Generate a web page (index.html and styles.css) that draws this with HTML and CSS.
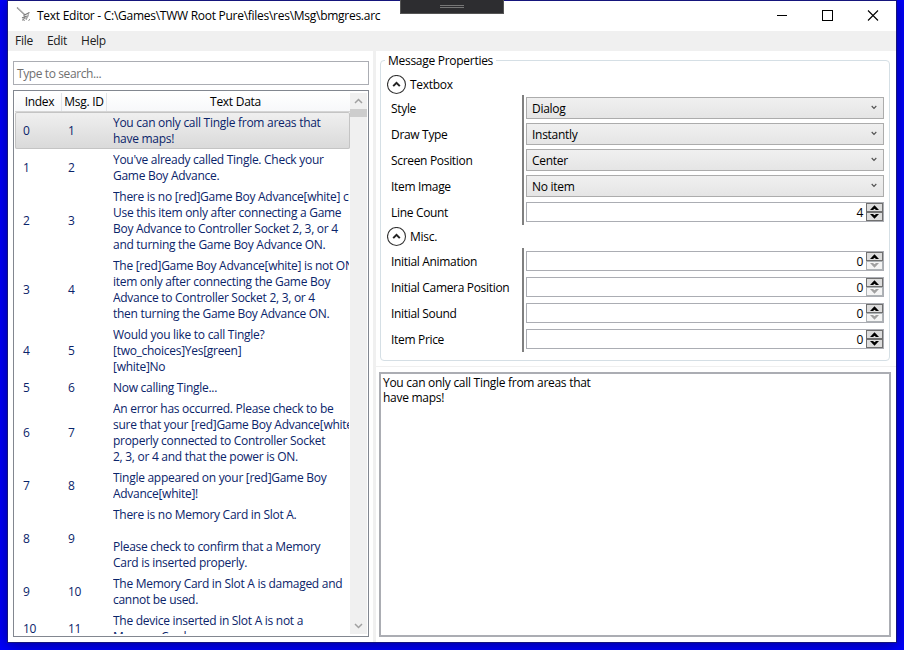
FILE: index.html
```
<!DOCTYPE html>
<html lang="en">
<head>
<meta charset="utf-8">
<title>Text Editor</title>
<link rel="stylesheet" href="styles.css">
</head>
<body>
<svg class="defs" width="0" height="0">
  <symbol id="chev" viewBox="0 0 6 5"><path d="M0.7 1 L3 3.4 L5.3 1" fill="none" stroke="#505050" stroke-width="1.1"/></symbol>
  <symbol id="up" viewBox="0 0 9 5"><path d="M0 5 L4.5 0.2 L9 5 H6 L4.5 3.8 L3 5 Z" fill="currentColor"/></symbol>
  <symbol id="down" viewBox="0 0 9 5"><path d="M0 0 L4.5 4.8 L9 0 H6 L4.5 1.2 L3 0 Z" fill="currentColor"/></symbol>
  <symbol id="expand" viewBox="0 0 20 20"><circle cx="9.5" cy="9.5" r="9" fill="#fff" stroke="#333" stroke-width="1.1"/><path d="M6.2 11.1 L9.5 7.8 L12.8 11.1" fill="none" stroke="#222" stroke-width="2"/></symbol>
</svg>
<div class="window">
  <div class="dock"><i></i><i></i></div>
  <header class="title">
    <svg class="logo" width="16" height="16" viewBox="0 0 16 16" fill="none"><path d="M1 0.5 L9 8" stroke="#8a8a8a" stroke-width="1.3"/><path d="M2.2 1 L9.5 7.6" stroke="#d5d5d5" stroke-width=".7"/><path d="M7.5 8.5 L10.5 7 L13.5 5.5 M6 11 L9 9.5 L12.5 9 M6.5 13.5 L8.5 11 L11 11" stroke="#777" stroke-width="1.1"/><path d="M12.5 5.5 L12 9 M6.5 12.5 L9 13.5 M11.5 10 L10 13 M13.8 12 L12.5 14" stroke="#999"/></svg>
    <span class="caption">Text Editor - C:\Games\TWW Root Pure\files\res\Msg\bmgres.arc</span>
    <svg class="controls" width="104" height="12" viewBox="0 0 104 12" fill="none" stroke="#000" shape-rendering="crispEdges"><path d="M1 5.5 H11"/><rect x="46.5" y="0.5" width="10" height="10"/><path shape-rendering="auto" d="M92 0.5 L102 10.5 M102 0.5 L92 10.5" stroke-width="1.1"/></svg>
  </header>
  <nav class="menu"><span>File</span><span>Edit</span><span>Help</span></nav>
  <main class="content">
    <section class="left">
      <div class="search">Type to search...</div>
      <div class="list">
        <div class="table">
          <div class="thead"><span>Index</span><span>Msg. ID</span><span>Text Data</span></div>
          <div class="row selected"><span>0</span><span>1</span><p>You can only call Tingle from areas that
have maps!</p></div>
          <div class="row"><span>1</span><span>2</span><p>You've already called Tingle. Check your
Game Boy Advance.</p></div>
          <div class="row"><span>2</span><span>3</span><p>There is no [red]Game Boy Advance[white] co
Use this item only after connecting a Game
Boy Advance to Controller Socket 2, 3, or 4
and turning the Game Boy Advance ON.</p></div>
          <div class="row"><span>3</span><span>4</span><p>The [red]Game Boy Advance[white] is not ON
item only after connecting the Game Boy
Advance to Controller Socket 2, 3, or 4
then turning the Game Boy Advance ON.</p></div>
          <div class="row"><span>4</span><span>5</span><p>Would you like to call Tingle?
[two_choices]Yes[green]
[white]No</p></div>
          <div class="row"><span>5</span><span>6</span><p>Now calling Tingle...</p></div>
          <div class="row"><span>6</span><span>7</span><p>An error has occurred. Please check to be
sure that your [red]Game Boy Advance[white
properly connected to Controller Socket
2, 3, or 4 and that the power is ON.</p></div>
          <div class="row"><span>7</span><span>8</span><p>Tingle appeared on your [red]Game Boy
Advance[white]!</p></div>
          <div class="row"><span>8</span><span>9</span><p>There is no Memory Card in Slot A.

Please check to confirm that a Memory
Card is inserted properly.</p></div>
          <div class="row"><span>9</span><span>10</span><p>The Memory Card in Slot A is damaged and
cannot be used.</p></div>
          <div class="row"><span>10</span><span>11</span><p>The device inserted in Slot A is not a
Memory Card.</p></div>
        </div>
        <div class="scroll">
          <svg width="9" height="6" viewBox="0 0 9 6"><path d="M1 5 L4.5 1.5 L8 5" fill="none" stroke="#a0a0a0" stroke-width="1.5"/></svg>
          <div class="thumb"></div>
          <svg width="9" height="6" viewBox="0 0 9 6"><path d="M1 1 L4.5 4.5 L8 1" fill="none" stroke="#a0a0a0" stroke-width="1.5"/></svg>
        </div>
      </div>
    </section>
    <div class="vsplit"></div>
    <section class="right">
      <fieldset class="props">
        <legend>Message Properties</legend>
        <div class="expander first"><svg width="20" height="20"><use href="#expand"/></svg>Textbox</div>
        <div class="prop"><label>Style</label><div class="combo">Dialog<svg width="6" height="5"><use href="#chev"/></svg></div></div>
        <div class="prop"><label>Draw Type</label><div class="combo">Instantly<svg width="6" height="5"><use href="#chev"/></svg></div></div>
        <div class="prop"><label>Screen Position</label><div class="combo">Center<svg width="6" height="5"><use href="#chev"/></svg></div></div>
        <div class="prop"><label>Item Image</label><div class="combo">No item<svg width="6" height="5"><use href="#chev"/></svg></div></div>
        <div class="prop"><label>Line Count</label><div class="num"><span>4</span><div class="spin"><b><svg width="9" height="5"><use href="#up"/></svg></b><b><svg width="9" height="5"><use href="#down"/></svg></b></div></div></div>
        <div class="expander"><svg width="20" height="20"><use href="#expand"/></svg>Misc.</div>
        <div class="prop"><label>Initial Animation</label><div class="num"><span>0</span><div class="spin"><b><svg width="9" height="5"><use href="#up"/></svg></b><b class="off"><svg width="9" height="5"><use href="#down"/></svg></b></div></div></div>
        <div class="prop"><label>Initial Camera Position</label><div class="num"><span>0</span><div class="spin"><b><svg width="9" height="5"><use href="#up"/></svg></b><b class="off"><svg width="9" height="5"><use href="#down"/></svg></b></div></div></div>
        <div class="prop"><label>Initial Sound</label><div class="num"><span>0</span><div class="spin"><b><svg width="9" height="5"><use href="#up"/></svg></b><b class="off"><svg width="9" height="5"><use href="#down"/></svg></b></div></div></div>
        <div class="prop"><label>Item Price</label><div class="num"><span>0</span><div class="spin"><b><svg width="9" height="5"><use href="#up"/></svg></b><b><svg width="9" height="5"><use href="#down"/></svg></b></div></div></div>
      </fieldset>
      <div class="hsplit"></div>
      <div class="editor">You can only call Tingle from areas that
have maps!</div>
    </section>
  </main>
</div>
</body>
</html>
```
FILE: styles.css
```
* { box-sizing: border-box; }
body {
  margin: 0;
  width: 904px;
  height: 650px;
  padding: 0 7px 7px;
  overflow: hidden;
  background: #00f;
  font: 12px/16px "Open Sans", "Noto Sans", sans-serif;
  letter-spacing: -0.28px;
  color: #000;
}
.defs { position: absolute; }
svg { display: block; flex: none; }
.window {
  position: relative;
  height: 643px;
  border: 1px solid #15157c;
  background: #fff;
  display: flex;
  flex-direction: column;
  box-shadow: 0 2px 14px rgba(0, 0, 30, .5);
}
.dock {
  position: absolute;
  left: 392px;
  top: -1px;
  width: 104px;
  height: 14px;
  background: #2d2d30;
  border: 1px solid #555;
  border-top: 0;
  display: flex;
  flex-direction: column;
  align-items: center;
  gap: 1px;
  padding-top: 5px;
}
.dock i { width: 24px; height: 1px; background: #777; }
.title { height: 30px; display: flex; align-items: center; padding: 0 16px 0 8px; }
.logo { margin: -2px 5px 0 0; }
.caption { flex: 1; white-space: pre; letter-spacing: -0.27px; }
.menu { height: 20px; background: #f0f0f0; display: flex; gap: 14px; padding: 2px 7px; color: #212121; }
.content { flex: 1; min-height: 0; display: flex; }
.left { width: 365px; padding: 10px 4px 5px 5px; display: flex; flex-direction: column; gap: 5px; }
.search { height: 24px; border: 1px solid #abadb3; padding: 4px 3px; color: #707070; letter-spacing: -0.4px; }
.list { flex: 1; min-height: 0; border: 1px solid #828790; padding: 2px 1px; display: flex; }
.table { flex: 1; min-width: 0; overflow: hidden; }
.thead {
  height: 19px;
  display: grid;
  grid-template-columns: 47px 45px 1fr;
  text-align: center;
  line-height: 17px;
  border-bottom: 1px solid #d5d5d5;
  background: linear-gradient(#fff, #f7f8fa);
}
.thead span { border-right: 1px solid #e3e6ea; }
.thead span:first-child { padding-left: 3px; }
.thead span:last-child { border: 0; padding-left: 14px; }
.row {
  display: grid;
  grid-template-columns: 45px 45px 245px;
  align-items: center;
  padding: 3px 0 2px 8px;
  color: #0a246a;
}
.row p { margin: 0; white-space: pre; overflow: hidden; width: 236px; }
.selected { background: linear-gradient(#f0f0f0, #d9d9d9); box-shadow: inset 0 0 0 1px #c4c4c4; border-radius: 2px; }
.scroll {
  width: 17px;
  background: #f0f0f0;
  display: flex;
  flex-direction: column;
  align-items: center;
  padding: 5px 0 5px;
}
.thumb { width: 17px; height: 8px; background: #cdcdcd; margin: 5px 0 auto; }
.vsplit { width: 3px; background: #f0f0f0; }
.right { flex: 1; min-width: 0; display: flex; flex-direction: column; }
.props {
  margin: 1px 6px 0 4px;
  height: 309px;
  border: 1px solid #d5dfe5;
  border-radius: 4px;
  padding: 0 5px;
}
.props legend { padding: 0 3px; margin-left: -1px; line-height: 17px; }
.expander { height: 23px; display: flex; align-items: center; gap: 3px; padding: 1px 0 0 1px; }
.expander.first { height: 26px; padding-top: 5px; }
.prop { height: 26px; display: flex; }
.prop label { width: 138px; padding: 6px 0 0 5px; margin-right: 2px; border-right: 2px solid #808080; white-space: nowrap; letter-spacing: -0.32px; }
.combo {
  flex: 1;
  height: 22px;
  margin: 2px 0;
  border: 1px solid #acacac;
  background: linear-gradient(#f0f0f0, #e5e5e5);
  padding: 2px 6px 0 5px;
  display: flex;
  align-items: center;
  justify-content: space-between;
}
.combo svg { margin-top: -4px; }
.num {
  flex: 1;
  height: 20px;
  margin: 3px 0;
  border: 1px solid #abadb3;
  display: flex;
  align-items: center;
  justify-content: flex-end;
  gap: 3px;
}
.num span { padding-top: 2px; }
.spin { width: 17px; height: 18px; display: flex; flex-direction: column; }
.spin b { height: 9px; border: 1px solid #707070; background: #ddd; display: flex; align-items: center; justify-content: center; }
.spin .off { color: #a0a0a0; border-color: #adb2b5; background: #f4f4f4; }
.hsplit { height: 1px; margin-top: 5px; background: #f0f0f0; }
.editor { flex: 1; margin: 5px 5px 5px 3px; border: 2px solid #abadb3; padding: 1px 2px; line-height: 15px; white-space: pre; }
```
